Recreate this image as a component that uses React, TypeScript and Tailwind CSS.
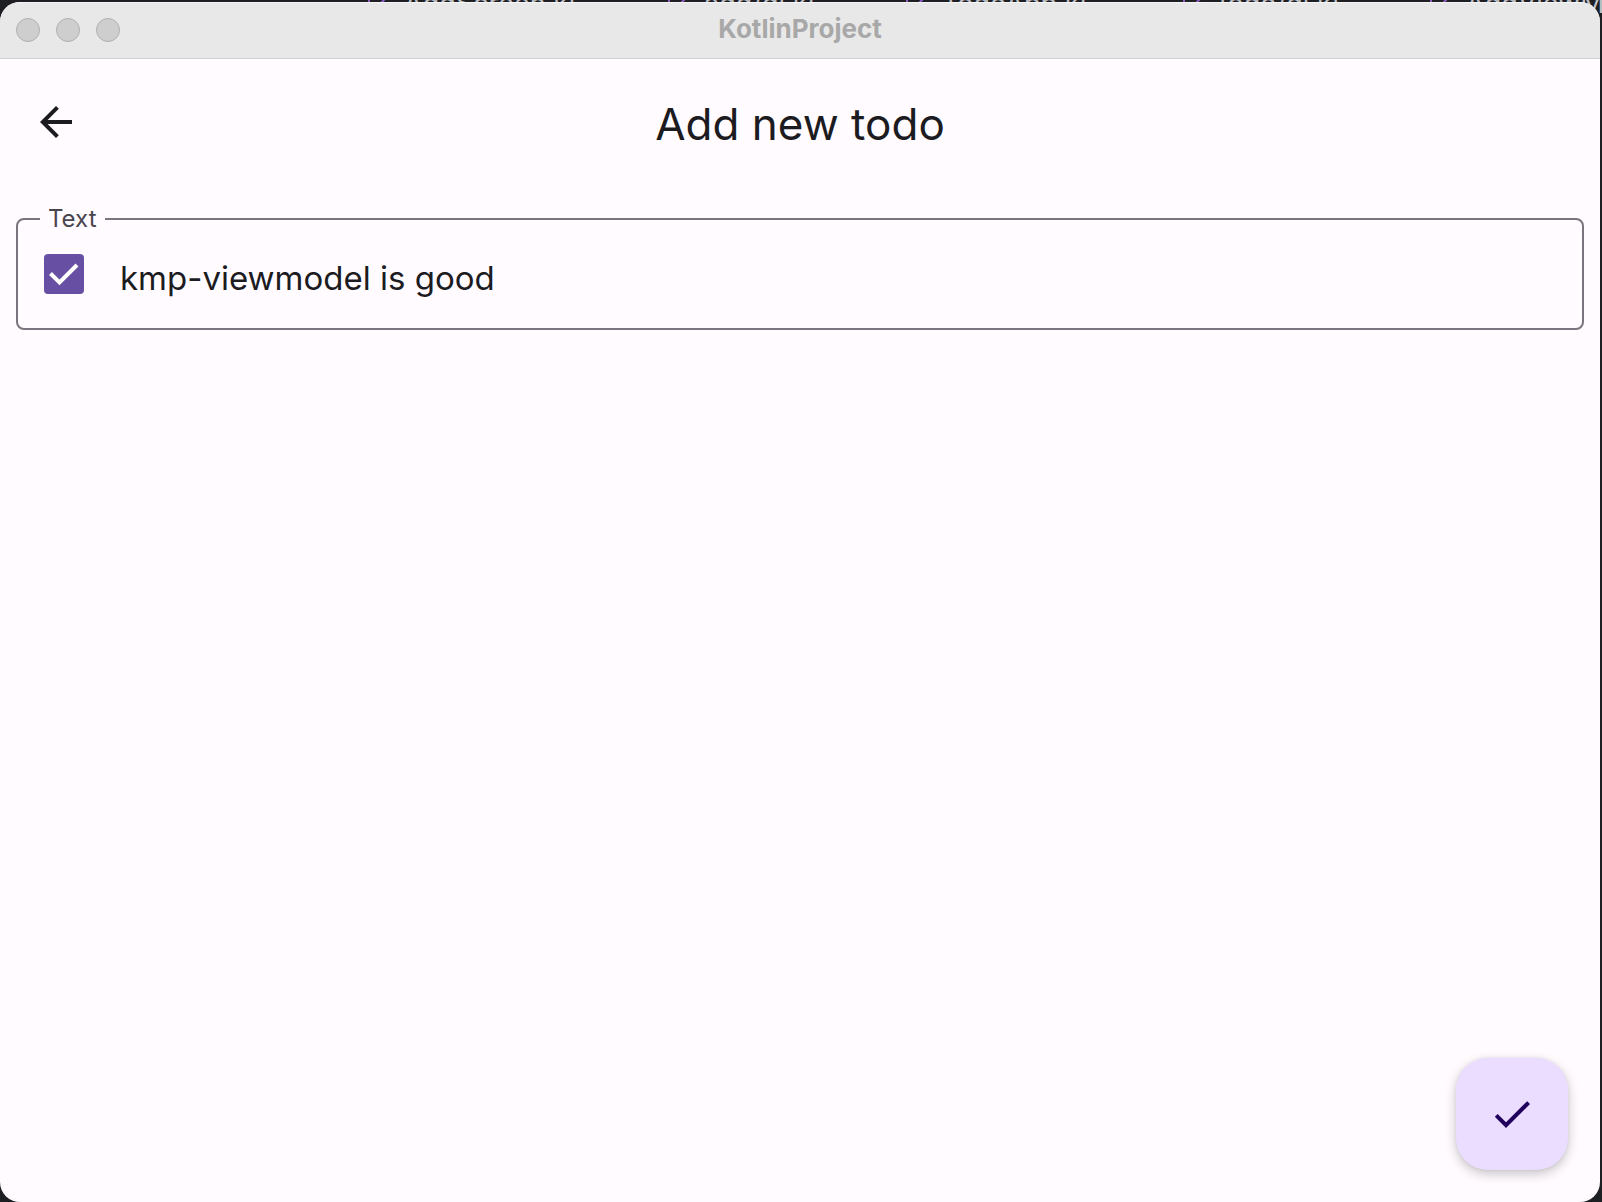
import { useState } from "react";

const editorTabs = [
  { name: "AddScreen.kt", width: "w-[300px]" },
  { name: "add/di.kt", width: "w-[238px]" },
  { name: "TodoApp.kt", width: "w-[277px]" },
  { name: "todo/di.kt", width: "w-[247px]" },
  { name: "AddViewModel.kt", width: "w-[320px]" },
];

/** Editor tabs of the window that lies behind the app window. */
function EditorBackdrop() {
  return (
    <div
      aria-hidden="true"
      className="absolute inset-0 flex items-start overflow-hidden bg-[#1e1f22] pl-[368px] text-[#bcbec4]"
    >
      {editorTabs.map((tab) => (
        <div key={tab.name} className={"-mt-3 flex shrink-0 gap-2 text-[27px] leading-8 " + tab.width}>
          <svg className="size-7" viewBox="0 0 28 28" fill="none" stroke="#8f5fc7" strokeWidth="2">
            <path d="M1 1v22M22 6 5 23" />
          </svg>
          <span>{tab.name}</span>
        </div>
      ))}
    </div>
  );
}

function TitleBar() {
  return (
    <header className="grid h-[57px] grid-cols-[1fr_auto_1fr] items-center border-b border-[#d3d0d3] bg-[#e8e8e8] px-4 shadow-[inset_0_1px_0_#f6f6f6]">
      <div className="flex gap-4">
        {["Close", "Minimize", "Zoom"].map((label) => (
          <button
            key={label}
            type="button"
            aria-label={label}
            className="size-6 rounded-full border border-[#b0b0b0] bg-[#cecece]"
          />
        ))}
      </div>
      <p className="pb-0.5 text-[26px] leading-8 font-bold text-[#a8a8a8]">KotlinProject</p>
    </header>
  );
}

export default function App() {
  const [done, setDone] = useState(true);
  const [text, setText] = useState("kmp-viewmodel is good");

  return (
    <div className="relative isolate h-screen overflow-hidden pt-0.5 pr-0.5 font-['Inter',sans-serif]">
      <EditorBackdrop />
      <div className="relative flex h-full flex-col overflow-hidden rounded-[20px] bg-[#fffbff]">
        <TitleBar />

        <div className="grid h-32 grid-cols-[1fr_auto_1fr] items-center px-8 pb-0.5">
          <button type="button" aria-label="Back" className="size-12 text-[#1c1b1f]">
            <svg viewBox="0 0 24 24" className="size-12" fill="currentColor">
              <path d="M20 11H7.83l5.59-5.59L12 4l-8 8 8 8 1.41-1.41L7.83 13H20v-2z" />
            </svg>
          </button>
          <h1 className="pt-1 text-[44px] leading-[56px] text-[#1c1b1f]">Add new todo</h1>
        </div>

        <main className="flex-1 px-4 pt-4">
          <fieldset className="h-[127px] rounded-lg border-2 border-[#79747e] px-[22px]">
            <legend className="px-2 text-2xl leading-8 text-[#49454f]">
              <label htmlFor="todo-text">Text</label>
            </legend>
            <div className="flex h-[78px] items-center gap-9 pl-1">
              <label className="relative size-10 shrink-0">
                <input
                  type="checkbox"
                  aria-label="Done"
                  checked={done}
                  onChange={(e) => setDone(e.target.checked)}
                  className="block size-10 appearance-none rounded-sm border-4 border-[#6750a4] checked:bg-[#6750a4]"
                />
                {done && (
                  <svg
                    viewBox="0 0 40 40"
                    className="pointer-events-none absolute inset-0 size-10"
                    fill="none"
                    stroke="#fff"
                    strokeWidth="4"
                  >
                    <path d="M6.5 19.5 15.5 28.5 33 11" />
                  </svg>
                )}
              </label>
              <input
                id="todo-text"
                type="text"
                value={text}
                onChange={(e) => setText(e.target.value)}
                className="h-14 min-w-0 flex-1 bg-transparent pt-2 text-[33px] leading-[48px] text-[#1c1b1f] outline-none"
              />
            </div>
          </fieldset>
        </main>

        <div className="flex justify-end p-8">
          <button
            type="button"
            aria-label="Save"
            className="flex size-28 items-center justify-center rounded-[32px] bg-[#eaddff] text-[#21005d] shadow-[0_4px_12px_rgba(0,0,0,0.22),0_0_4px_rgba(0,0,0,0.06)]"
          >
            <svg viewBox="0 0 24 24" className="size-12" fill="currentColor">
              <path d="M9 16.17 4.83 12l-1.42 1.41L9 19 21 7l-1.41-1.41z" />
            </svg>
          </button>
        </div>
      </div>
    </div>
  );
}
